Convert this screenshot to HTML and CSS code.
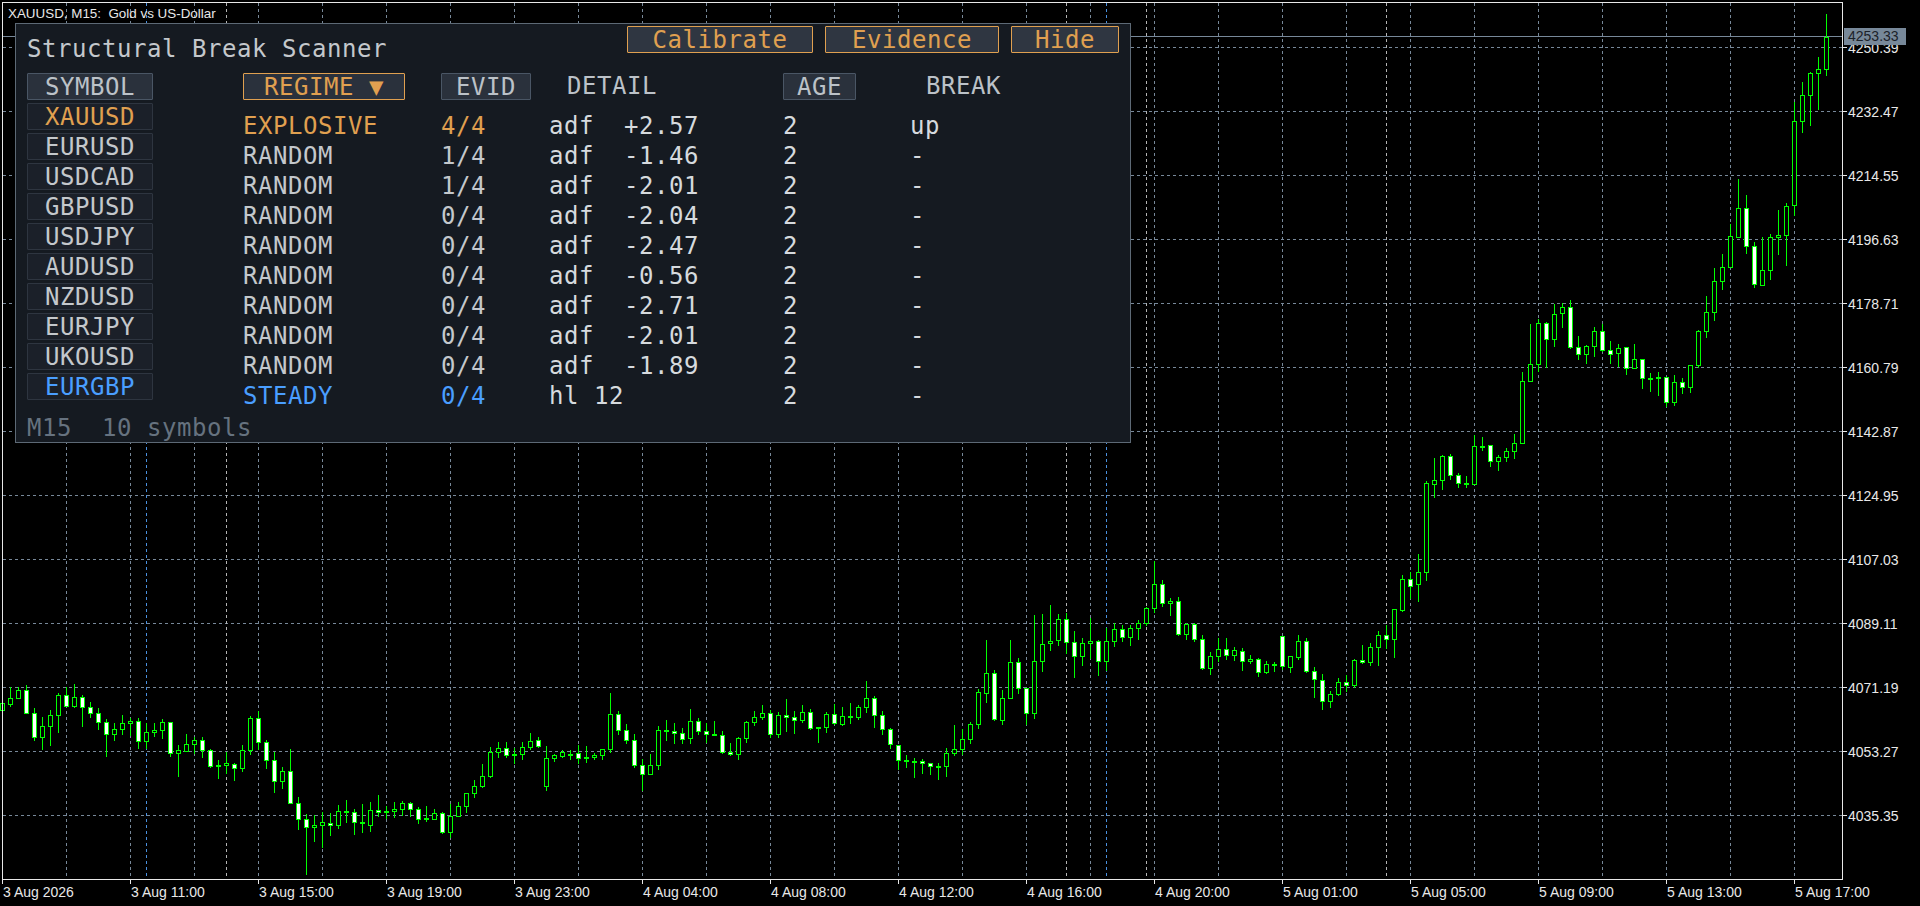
FILE: index.html
```html
<!DOCTYPE html>
<html lang="en">
<head>
  <meta charset="UTF-8" />
  <meta name="viewport" content="width=device-width, initial-scale=1.0"/>
  <title>Structural Break Scanner</title>
  <link rel="stylesheet" href="styles.css">
</head>
<body>
  <div class="terminal">
    <svg id="chart" class="chart" width="1920" height="906" viewBox="0 0 1920 906"></svg>

    <div class="panel">
      <div class="panel-head">
        <div class="panel-title">Structural Break Scanner</div>
        <div class="panel-actions">
          <button class="btn btn-action btn-calibrate">Calibrate</button>
          <button class="btn btn-action btn-evidence">Evidence</button>
          <button class="btn btn-action btn-hide">Hide</button>
        </div>
      </div>

      <div class="panel-body">
        <div class="symbols">
          <button class="btn btn-head">SYMBOL</button>
          <button class="btn chip orange">XAUUSD</button>
          <button class="btn chip">EURUSD</button>
          <button class="btn chip">USDCAD</button>
          <button class="btn chip">GBPUSD</button>
          <button class="btn chip">USDJPY</button>
          <button class="btn chip">AUDUSD</button>
          <button class="btn chip">NZDUSD</button>
          <button class="btn chip">EURJPY</button>
          <button class="btn chip">UKOUSD</button>
          <button class="btn chip blue">EURGBP</button>
        </div>

        <div class="table">
          <div class="table-head">
            <button class="btn btn-head btn-sorted col-regime">REGIME ▼</button>
            <button class="btn btn-head col-evid">EVID</button>
            <span class="head-text col-detail">DETAIL</span>
            <button class="btn btn-head col-age">AGE</button>
            <span class="head-text col-break">BREAK</span>
          </div>

          <div class="row orange"><span>EXPLOSIVE</span><span>4/4</span><span class="val">adf  +2.57</span><span class="val">2</span><span class="val">up</span></div>
          <div class="row"><span>RANDOM</span><span>1/4</span><span class="val">adf  -1.46</span><span class="val">2</span><span class="val">-</span></div>
          <div class="row"><span>RANDOM</span><span>1/4</span><span class="val">adf  -2.01</span><span class="val">2</span><span class="val">-</span></div>
          <div class="row"><span>RANDOM</span><span>0/4</span><span class="val">adf  -2.04</span><span class="val">2</span><span class="val">-</span></div>
          <div class="row"><span>RANDOM</span><span>0/4</span><span class="val">adf  -2.47</span><span class="val">2</span><span class="val">-</span></div>
          <div class="row"><span>RANDOM</span><span>0/4</span><span class="val">adf  -0.56</span><span class="val">2</span><span class="val">-</span></div>
          <div class="row"><span>RANDOM</span><span>0/4</span><span class="val">adf  -2.71</span><span class="val">2</span><span class="val">-</span></div>
          <div class="row"><span>RANDOM</span><span>0/4</span><span class="val">adf  -2.01</span><span class="val">2</span><span class="val">-</span></div>
          <div class="row"><span>RANDOM</span><span>0/4</span><span class="val">adf  -1.89</span><span class="val">2</span><span class="val">-</span></div>
          <div class="row blue"><span>STEADY</span><span>0/4</span><span class="val">hl 12</span><span class="val">2</span><span class="val">-</span></div>
        </div>
      </div>

      <div class="panel-foot">M15  10 symbols</div>
    </div>
  </div>

  <script src="chart.js"></script>
</body>
</html>
```

FILE: styles.css
```css
* {
  box-sizing: border-box;
}

body {
  margin: 0;
  background: #000;
  overflow: hidden;
}

.terminal {
  position: relative;
  width: 1920px;
  height: 906px;
  overflow: hidden;
}

.chart {
  display: block;
}

.chart text {
  font-family: "Liberation Sans", Arial, sans-serif;
  font-size: 14px;
  fill: #e8e8e8;
  white-space: pre;
}

.chart .chart-title {
  font-size: 13.4px;
}

.chart .last-price {
  fill: #1c222a;
}

/* scanner panel, sits over the chart */
.panel {
  position: absolute;
  left: 15px;
  top: 23px;
  width: 1116px;
  height: 420px;
  padding: 2px 11px 0 11px;
  background: #151a21;
  border: 1px solid #5d6975;
  font-family: "DejaVu Sans Mono", monospace;
  font-size: 24px;
  letter-spacing: 0.55px;
  color: #c4c8cc;
}

.panel-head {
  display: flex;
  justify-content: space-between;
  height: 47px;
}

.panel-title {
  margin-top: 8px;
  line-height: 30px;
  color: #c4c8cc;
}

.panel-actions {
  display: flex;
  gap: 12px;
}

.btn {
  display: block;
  height: 27px;
  margin: 0;
  padding: 0;
  font: inherit;
  letter-spacing: inherit;
  line-height: 27px;
  text-align: center;
  color: #bcc2c8;
  background: #2a313c;
  border: 1px solid #4a5665;
  border-radius: 1px;
}

.btn-action {
  color: #e0a050;
  background: #2f3641;
  border-color: #e0a050;
}

.btn-calibrate { width: 186px; }
.btn-evidence { width: 174px; }
.btn-hide { width: 108px; }

.panel-body {
  display: flex;
}

.symbols {
  display: flex;
  flex-direction: column;
  gap: 3px;
  width: 126px;
  margin-right: 90px;
}

.chip {
  color: #c4c8cc;
  background: #1b2029;
  border-color: #2e3540;
}

.btn-sorted {
  color: #e0a050;
  border-color: #e0a050;
}

.chip.orange { color: #e0a050; }
.chip.blue { color: #4a9eff; }

.table {
  flex: 1;
}

.table-head,
.row {
  display: grid;
  grid-template-columns: 198px 108px 234px 127px 1fr;
}

.table-head {
  height: 27px;
  margin-bottom: 11px;
}

.head-text {
  line-height: 27px;
  color: #bcc2c8;
}

.col-regime { width: 162px; }
.col-evid { width: 90px; }
.col-detail { padding-left: 18px; }
.col-age { width: 73px; }
.col-break { padding-left: 16px; }

.row {
  height: 30px;
  line-height: 30px;
}

.row .val {
  color: #d6dade;
  white-space: pre;
}

.row.orange span:nth-child(-n+2) { color: #e0a050; }
.row.blue span:nth-child(-n+2) { color: #4a9eff; }

.panel-foot {
  margin-top: 2px;
  line-height: 30px;
  color: #66727f;
  white-space: pre;
}
```

FILE: chart.js
```js
const svg = document.getElementById("chart");

const GRID = "#778899";
const GREEN = "#00ff00";
const FRAME = { left: 2, top: 2, right: 1842, bottom: 879 };

const prices = [
  [47, "4250.39"], [111, "4232.47"], [175, "4214.55"], [239, "4196.63"], [303, "4178.71"],
  [367, "4160.79"], [431, "4142.87"], [495, "4124.95"], [559, "4107.03"], [623, "4089.11"],
  [687, "4071.19"], [751, "4053.27"], [815, "4035.35"]
];

const times = [
  "3 Aug 2026", "3 Aug 11:00", "3 Aug 15:00", "3 Aug 19:00", "3 Aug 23:00",
  "4 Aug 04:00", "4 Aug 08:00", "4 Aug 12:00", "4 Aug 16:00", "4 Aug 20:00",
  "5 Aug 01:00", "5 Aug 05:00", "5 Aug 09:00", "5 Aug 13:00", "5 Aug 17:00"
];

// extra vertical markers on the chart
const separators = [[146, "#4a90e0"], [226, "#b4b4b4"], [1066, "#b4b4b4"], [1106, "#4a90e0"], [1146, "#b4b4b4"], [1386, "#b4b4b4"]];

// high, body top, body bottom, low, filled
const bars = [
  [703,703,710,710,0],[687,698,704,706,0],[687,690,698,698,0],[685,690,713,713,1],[708,713,737,740,1],
  [717,726,737,749,0],[710,715,726,745,0],[693,695,715,732,0],[687,695,706,706,1],[684,697,706,707,0],
  [695,697,707,726,1],[702,707,713,717,1],[708,713,722,729,1],[719,722,734,756,1],[723,729,734,740,0],
  [715,723,729,734,0],[718,721,723,735,0],[718,721,741,748,1],[723,732,741,748,0],[723,730,732,736,0],
  [719,722,730,738,0],[722,722,753,756,1],[745,750,753,776,0],[734,744,751,751,0],[737,740,744,753,0],
  [737,740,750,757,1],[749,750,766,767,1],[760,765,765,778,0],[752,763,765,773,0],[763,764,768,780,1],
  [745,750,768,771,0],[716,718,750,754,0],[711,718,742,749,1],[740,742,760,768,1],[752,760,781,792,1],
  [767,771,781,788,0],[749,771,803,803,1],[797,803,819,829,1],[814,819,827,874,1],[815,825,827,841,0],
  [812,822,825,847,0],[813,823,825,835,1],[805,811,825,828,0],[800,811,812,822,1],[809,812,822,834,1],
  [804,822,823,832,1],[802,810,825,831,0],[795,810,812,816,1],[806,811,812,818,1],[802,809,811,817,0],
  [801,803,809,815,0],[802,803,809,816,1],[807,809,819,823,1],[806,818,819,821,1],[809,813,819,819,0],
  [812,813,832,833,1],[804,816,832,837,0],[802,806,816,816,0],[793,793,806,812,0],[780,786,793,797,0],
  [764,776,786,787,0],[747,752,776,777,0],[742,748,752,757,0],[742,748,755,757,1],[748,754,755,763,1],
  [742,747,754,759,0],[733,741,747,749,0],[737,740,746,747,1],[746,758,786,790,0],[754,755,758,761,0],
  [750,752,756,757,0],[750,754,754,759,0],[745,753,758,763,1],[746,757,758,762,1],[753,755,757,759,0],
  [749,749,755,759,0],[693,714,749,752,0],[711,714,730,734,1],[724,730,740,743,1],[734,740,765,767,1],
  [759,765,774,790,1],[754,765,774,774,0],[726,730,765,769,0],[720,730,731,740,1],[723,731,733,743,1],
  [728,733,739,743,1],[709,721,738,743,0],[718,721,731,734,1],[723,731,734,742,1],[721,734,735,735,1],
  [731,735,752,753,1],[743,752,754,755,1],[737,738,754,759,0],[721,722,738,742,0],[711,717,722,725,0],
  [705,713,717,719,0],[710,713,734,737,1],[712,715,734,737,0],[699,715,717,731,1],[711,717,720,733,1],
  [705,712,720,722,0],[709,712,728,729,1],[727,727,728,742,1],[712,714,727,732,0],[704,714,723,724,1],
  [707,716,724,725,0],[703,716,717,723,1],[705,707,717,719,0],[681,698,707,712,0],[696,698,715,727,1],
  [711,715,729,734,1],[728,729,744,748,1],[745,745,760,769,1],[755,760,761,767,1],[758,761,761,777,1],
  [759,761,763,773,1],[763,763,766,774,1],[763,766,766,779,1],[748,753,766,776,0],[725,749,753,755,0],
  [729,739,749,754,0],[722,724,739,743,0],[689,692,724,728,0],[640,673,693,702,0],[670,673,719,720,1],
  [690,698,720,724,0],[640,662,698,698,0],[658,662,688,693,1],[688,688,713,724,1],[615,661,713,718,0],
  [614,644,661,671,0],[605,641,643,650,0],[614,619,640,645,0],[613,619,642,653,1],[631,642,656,677,1],
  [638,643,656,665,0],[618,641,643,658,0],[640,641,661,675,1],[628,641,661,670,0],[623,629,641,646,0],
  [625,629,637,641,1],[625,628,637,645,0],[620,623,628,639,0],[607,608,623,625,0],[561,584,608,612,0],
  [580,584,603,606,1],[598,601,603,615,0],[597,601,634,635,1],[623,624,634,639,0],[623,624,639,641,1],
  [635,639,668,669,1],[652,656,668,674,0],[638,649,656,661,0],[638,649,655,659,1],[647,650,655,660,0],
  [648,651,661,670,1],[655,659,661,663,0],[658,659,672,676,1],[661,664,672,673,0],[662,664,664,671,0],
  [636,636,666,669,1],[656,656,667,672,0],[635,641,657,659,0],[638,641,671,672,1],[667,671,679,697,1],
  [674,680,701,709,1],[691,694,701,707,0],[678,682,694,695,0],[675,682,685,691,1],[659,660,685,687,0],
  [645,660,662,663,1],[643,647,662,665,0],[631,635,647,665,0],[625,635,639,648,1],[609,609,639,657,0],
  [575,579,610,611,0],[572,579,586,598,1],[554,572,584,601,0],[481,483,572,580,0],[458,480,484,497,0],
  [455,456,480,489,0],[454,456,475,479,1],[473,475,483,487,1],[476,483,483,487,1],[435,446,484,484,0],
  [437,446,446,450,1],[445,445,461,466,1],[455,457,461,470,0],[448,451,457,461,0],[434,443,451,458,0],
  [372,381,443,443,0],[324,364,381,381,0],[319,323,364,371,0],[322,323,339,367,1],[304,314,339,346,0],
  [303,307,313,327,0],[300,307,347,348,1],[336,347,354,359,1],[345,346,354,363,0],[327,331,346,356,0],
  [324,331,350,351,1],[341,350,354,363,1],[344,348,353,366,0],[347,347,368,374,1],[344,359,368,368,0],
  [359,359,378,388,1],[373,378,378,391,1],[372,377,377,395,1],[377,377,402,406,1],[375,382,402,405,0],
  [378,382,387,393,1],[365,365,387,392,0],[330,331,365,367,0],[296,312,331,337,0],[268,281,312,320,0],
  [254,267,281,289,0],[224,236,267,267,0],[179,208,237,237,0],[195,208,246,253,1],[242,246,284,287,1],
  [237,270,285,285,0],[234,237,270,279,0],[210,235,237,254,0],[203,206,235,265,0],[102,121,205,215,0],
  [82,95,121,132,0],[72,73,95,125,0],[57,69,73,109,0],[14,37,69,75,0]
];

let html = "";

function line(x1, y1, x2, y2, color, dashed) {
  const dash = dashed ? ' stroke-dasharray="3 3"' : "";
  return `<line x1="${x1}" y1="${y1}" x2="${x2}" y2="${y2}" stroke="${color}"${dash} shape-rendering="crispEdges"/>`;
}

// grid
prices.forEach(p => {
  html += line(FRAME.left + 1, p[0] + 0.5, FRAME.right, p[0] + 0.5, GRID, true);
});
for (let x = 66; x < FRAME.right; x += 64) {
  html += line(x + 0.5, FRAME.top + 1, x + 0.5, FRAME.bottom, GRID, true);
}
separators.forEach(s => {
  html += line(s[0] + 0.5, FRAME.top + 1, s[0] + 0.5, FRAME.bottom, s[1], true);
});

// last price line
html += line(FRAME.left + 1, 36.5, FRAME.right, 36.5, GRID, false);

// candles
bars.forEach((b, i) => {
  const x = 2 + i * 8;
  const bottom = Math.max(b[2], b[1] + 1);
  html += line(x + 0.5, b[0], x + 0.5, b[3] + 1, GREEN, false);
  html += `<rect x="${x - 1.5}" y="${b[1] + 0.5}" width="4" height="${bottom - b[1]}" fill="${b[4] ? "#fff" : "#000"}" stroke="${GREEN}" shape-rendering="crispEdges"/>`;
});

// frame
html += `<rect x="${FRAME.left + 0.5}" y="${FRAME.top + 0.5}" width="${FRAME.right - FRAME.left}" height="${FRAME.bottom - FRAME.top}" fill="none" stroke="#e8e8e8" shape-rendering="crispEdges"/>`;

// price axis
prices.forEach(p => {
  html += line(FRAME.right, p[0] + 0.5, FRAME.right + 5, p[0] + 0.5, "#e8e8e8", false);
  html += `<text x="1848" y="${p[0] + 6}">${p[1]}</text>`;
});

// time axis
times.forEach((t, i) => {
  const x = 2 + i * 128;
  html += line(x + 0.5, FRAME.bottom, x + 0.5, FRAME.bottom + 5, "#e8e8e8", false);
  html += `<text x="${x + 1}" y="897">${t}</text>`;
});

// last price tag and title
html += `<rect x="1844" y="28" width="62" height="17" fill="${GRID}"/>`;
html += `<text class="last-price" x="1848" y="41">4253.33</text>`;
html += `<text class="chart-title" x="8" y="18">XAUUSD, M15:  Gold vs US-Dollar</text>`;

svg.innerHTML = html;
```
